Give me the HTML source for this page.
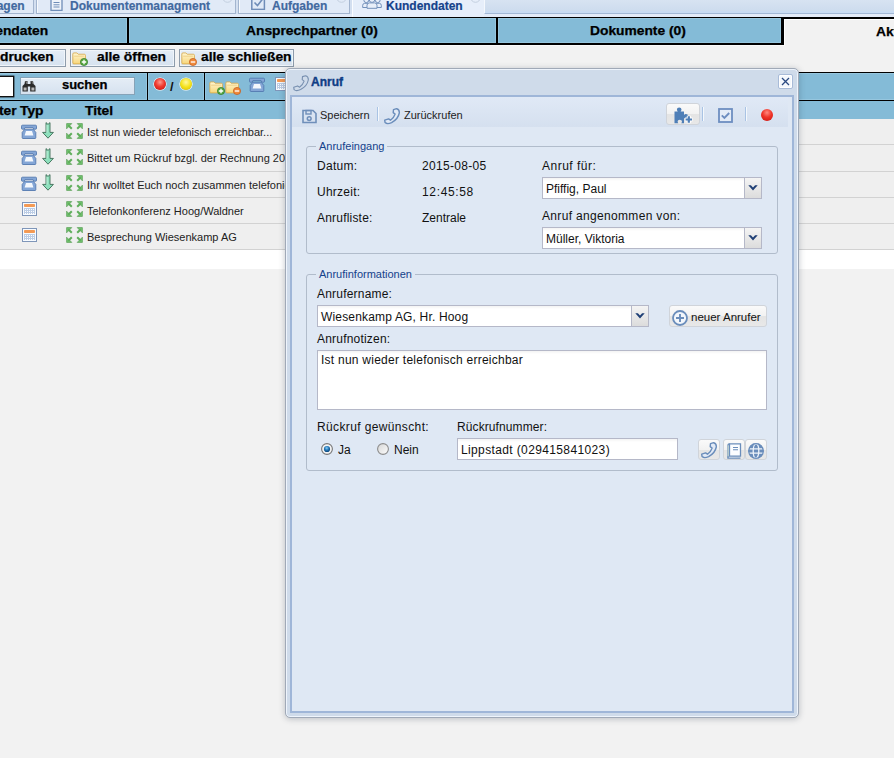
<!DOCTYPE html>
<html><head><meta charset="utf-8">
<style>
*{box-sizing:border-box;margin:0;padding:0}
html,body{width:894px;height:758px;overflow:hidden;background:#f2f2f2;font-family:"Liberation Sans",sans-serif;position:relative}
.a{position:absolute}
.t{position:absolute;white-space:pre;line-height:1}
/* tab strip */
#strip{left:0;top:0;width:894px;height:17px;background:#dfe8f4}
.tab{position:absolute;top:-4px;height:18px;background:#e1eaf7;border:1px solid #a3b5cf;border-top:none;box-shadow:inset 1px 0 0 #f6f9fd}
.tabt{position:absolute;top:1px;font-weight:bold;font-size:12px;color:#4169a0;white-space:pre;line-height:11px;-webkit-text-stroke:0.2px #4169a0}
/* header bar */
.hb{position:absolute;background:#84bbd7;border:1px solid #96c6de}
.bt{font-weight:bold;font-size:12px;color:#000;white-space:pre;position:absolute;line-height:1;transform:scaleX(1.15);transform-origin:0 0;-webkit-text-stroke:0.25px #000}
.btn{position:absolute;top:49px;height:18px;border:1px solid #8e9cab;background:linear-gradient(#e5edf6,#d6e2ef);box-shadow:inset 0 0 0 1px #f0f5fa}
.row{position:absolute;left:0;width:894px;height:26px;background:#efefef;border-bottom:1px solid #d2d2d2}
.rt{position:absolute;left:87px;font-size:11px;color:#222;white-space:pre;line-height:1;top:8px}
/* dialog */
#dlg{left:285px;top:68px;width:514px;height:650px;background:#cfdbea;border:1px solid #a0a9b7;border-radius:5px;box-shadow:0 1px 6px rgba(40,50,70,.28), inset 0 0 0 1px #eef4fc}
#body{left:290px;top:95px;width:504px;height:618px;background:#dfe8f4;border:2px solid #9fb6d8}
.lbl{position:absolute;font-size:12px;color:#111;white-space:pre;line-height:1}
.fs{position:absolute;border:1px solid #b1bccb;border-radius:3px}
.lg{position:absolute;font-size:11px;color:#15428b;background:#dfe8f4;padding:0 3px;white-space:pre;line-height:1}
.inp{position:absolute;background:#fff;border:1px solid #b5b8c8;background:linear-gradient(#f3f3f3 0,#fff 3px,#fff)}
.trig{position:absolute;top:-1px;right:-1px;width:18px;bottom:-1px;border:1px solid #b5b8c8;background:linear-gradient(#f4f4f4,#dcdcdc)}
.ibtn{position:absolute;border:1px solid #d0d4da;border-radius:3px;background:linear-gradient(#fafafa 0,#f2f2f2 50%,#e4e4e4 51%,#e8e8e8)}
</style></head><body>

<!-- ===== tab strip ===== -->
<div class="a" style="left:0;top:0;width:894px;height:17px;background:#e3ebf8"></div>
<div class="a" style="left:484px;top:-2px;width:420px;height:16px;background:linear-gradient(#d9e4f2 0,#cddcee 13px,#c9dcf3 13px);border-bottom:1px solid #a3b9d6;border-left:1px solid #f4f8fd"></div>
<div class="tab" style="left:-20px;width:54px"></div>
<div class="tabt" style="left:-28px">Anfragen</div>
<div class="tab" style="left:36px;width:200px"></div>
<div class="tabt" style="left:70px">Dokumentenmanagment</div>
<div class="tab" style="left:238px;width:112px"></div>
<div class="tabt" style="left:272px">Aufgaben</div>
<div class="a" style="left:350px;top:0;width:2px;height:14px;background:#d3dff0"></div>
<div class="a" style="left:34px;top:0;width:2px;height:14px;background:#d3dff0"></div>
<div class="a" style="left:236px;top:0;width:2px;height:14px;background:#d3dff0"></div>
<div class="a" style="left:352px;top:-2px;width:132px;height:19px;background:#e6eefa;border-left:1px solid #fafcff"></div>
<div class="tabt" style="left:386px;color:#15428b;-webkit-text-stroke:0.2px #15428b">Kundendaten</div>
<!-- ===== header bar ===== -->
<div class="a" style="left:0;top:17px;width:784px;height:28px;background:#000"></div>
<div class="hb" style="left:-2px;top:18px;width:129px;height:25px"></div>
<div class="hb" style="left:129px;top:18px;width:367px;height:25px"></div>
<div class="hb" style="left:498px;top:18px;width:283px;height:25px"></div>
<div class="a" style="left:784px;top:17px;width:110px;height:2px;background:#000"></div><div class="a" style="left:784px;top:19px;width:110px;height:1px;background:#fff"></div><div class="a" style="left:784px;top:19px;width:1px;height:27px;background:#fff"></div><div class="a" style="left:0;top:45px;width:785px;height:1px;background:#fafafa"></div>
<div class="bt" style="left:-40px;top:25px">Kundendaten</div>
<div class="bt" style="left:246px;top:25px">Ansprechpartner (0)</div>
<div class="bt" style="left:590px;top:25px">Dokumente (0)</div>
<div class="bt" style="left:876px;top:26px">Aktivitäten</div>

<!-- ===== button row ===== -->
<div class="btn" style="left:-20px;width:86px"></div>
<div class="bt" style="left:0;top:51px">drucken</div>
<div class="btn" style="left:70px;width:105px"></div>
<div class="bt" style="left:97px;top:51px">alle öffnen</div>
<div class="btn" style="left:179px;width:115px"></div>
<div class="bt" style="left:201px;top:51px">alle schließen</div>

<!-- ===== search bar ===== -->
<div class="a" style="left:0;top:72px;width:894px;height:29px;background:#000"></div>
<div class="hb" style="left:-2px;top:73px;width:149px;height:27px"></div>
<div class="hb" style="left:148px;top:73px;width:56px;height:27px"></div>
<div class="hb" style="left:205px;top:73px;width:700px;height:27px"></div>
<div class="a" style="left:-2px;top:76px;width:16px;height:21px;background:#fff;border:1px solid #111;box-shadow:0 0 0 .4px #111"></div>
<div class="btn" style="left:20px;top:77px;width:115px;height:18px;border-color:#86a3b8;box-shadow:inset 0 1px 0 #f4f8fc"></div>
<div class="bt" style="left:62px;top:79px;transform:scaleX(1.08)">suchen</div>

<!-- ===== grid header ===== -->
<div class="a" style="left:0;top:101px;width:894px;height:18px;background:#84bbd7"></div>
<div class="bt" style="left:-1px;top:105px">ter</div>
<div class="bt" style="left:20px;top:105px">Typ</div>
<div class="bt" style="left:85px;top:105px">Titel</div>

<!-- ===== rows ===== -->
<div class="row" style="top:119px;height:26px"><div class="rt">Ist nun wieder telefonisch erreichbar...</div></div>
<div class="row" style="top:145px;height:27px"><div class="rt">Bittet um Rückruf bzgl. der Rechnung 2015</div></div>
<div class="row" style="top:172px"><div class="rt">Ihr wolltet Euch noch zusammen telefonieren</div></div>
<div class="row" style="top:198px"><div class="rt">Telefonkonferenz Hoog/Waldner</div></div>
<div class="row" style="top:224px"><div class="rt">Besprechung Wiesenkamp AG</div></div>
<div class="a" style="left:0;top:250px;width:894px;height:19px;background:#fff"></div>


<!-- ===== icons top ===== -->
<svg class="a" style="left:50px;top:-3px" width="13" height="14" viewBox="0 0 13 14"><path d="M1 .5h8.5l2.5 2.5v10.3h-11z" fill="#eef3fa" stroke="#6f8db8" stroke-width="1.3"/><path d="M3.5 5.5h6M3.5 7.8h6M3.5 10h6" stroke="#6f8db8" stroke-width="1"/></svg>
<svg class="a" style="left:251px;top:-4px" width="15" height="14" viewBox="0 0 15 14"><rect x=".8" y=".8" width="12.6" height="12.6" fill="none" stroke="#6f8db8" stroke-width="1.5"/><path d="M3.5 6.5l3 3 5.5-7" fill="none" stroke="#6f8db8" stroke-width="1.6"/></svg>
<svg class="a" style="left:362px;top:-3px" width="20" height="12" viewBox="0 0 20 12"><g fill="#e8eff9" stroke="#7391bb" stroke-width="1"><path d="M.7 10.5v-2.2q0-1.8 2-2h3.5v4.2zM19.3 10.5v-2.2q0-1.8-2-2h-3.5v4.2z"/><circle cx="4.3" cy="3.2" r="2.4"/><circle cx="15.7" cy="3.2" r="2.4"/><path d="M5 11.3v-3q0-2.4 2.4-2.4h5.2q2.4 0 2.4 2.4v3z"/><circle cx="10" cy="2.6" r="2.8"/></g></svg>
<svg class="a" style="left:222px;top:-8px" width="11" height="11" viewBox="0 0 11 11"><circle cx="5.5" cy="5.5" r="4.8" fill="none" stroke="#c3cfdf" stroke-width="1"/></svg>
<svg class="a" style="left:336px;top:-8px" width="11" height="11" viewBox="0 0 11 11"><circle cx="5.5" cy="5.5" r="4.8" fill="none" stroke="#c3cfdf" stroke-width="1"/></svg>
<svg class="a" style="left:470px;top:-8px" width="11" height="11" viewBox="0 0 11 11"><circle cx="5.5" cy="5.5" r="4.8" fill="none" stroke="#c3cfdf" stroke-width="1"/></svg>

<svg width="0" height="0" style="position:absolute"><defs>
<symbol id="fold" viewBox="0 0 16 14"><path d="M.8 2.2q0-1.2 1.2-1.2h3.2l1.4 1.4h6.6q1.2 0 1.2 1.2v8.2q0 1-1 1H1.8q-1 0-1-1z" fill="url(#fg)" stroke="#d9a94a" stroke-width=".9"/><path d="M2.2 4.5h10.5" stroke="#e9c77a" stroke-width=".8"/></symbol>
<linearGradient id="fg" x1="0" y1="0" x2="0" y2="1"><stop offset="0" stop-color="#fff6d2"/><stop offset="1" stop-color="#f7d67a"/></linearGradient>
<symbol id="plus" viewBox="0 0 8 8"><circle cx="4" cy="4" r="3.6" fill="#58a843" stroke="#2f7d2a" stroke-width=".7"/><path d="M4 1.8v4.4M1.8 4h4.4" stroke="#fff" stroke-width="1.3"/></symbol>
<symbol id="minus" viewBox="0 0 8 8"><circle cx="4" cy="4" r="3.6" fill="#f08a3c" stroke="#c25a1c" stroke-width=".7"/><path d="M1.8 4h4.4" stroke="#fff" stroke-width="1.3"/></symbol>
<symbol id="dphone" viewBox="0 0 16 15"><path d="M1.5 1.2h13q1 0 1 1v2.2q0 .8-.8.8h-2l-.6-1.6h-8.2l-.6 1.6h-2q-.8 0-.8-.8v-2.2q0-1 1-1z" fill="#84a6d6" stroke="#5479b0" stroke-width=".9"/><path d="M3.8 5.2h8.4l2.6 3.2v5.3q0 .8-.8.8h-12q-.8 0-.8-.8v-5.3z" fill="#84a6d6" stroke="#5479b0" stroke-width=".9"/><path d="M5 7h6l1.4 4.5h-8.8z" fill="#f4f8fd"/></symbol>
<symbol id="arrow" viewBox="0 0 12 17"><path d="M4 .6l2 1.8 2-1.8v9.8h3.4L6 16.2.6 10.4H4z" fill="#8ee0bd" stroke="#3c6b55" stroke-width=".9" stroke-linejoin="round"/><path d="M5 3v7.5" stroke="#c8f3df" stroke-width=".9"/></symbol>
<symbol id="expand" viewBox="0 0 17 16"><g fill="#74c470" stroke="#4a9447" stroke-width=".6" stroke-linejoin="round"><path d="M.6.6h5.2L.6 5.8z"/><path d="M16.4.6h-5.2l5.2 5.2z"/><path d="M.6 15.4h5.2L.6 10.2z"/><path d="M16.4 15.4h-5.2l5.2-5.2z"/></g><g stroke="#5fae5b" stroke-width="2"><path d="M2.2 2.2l3.6 3.6M14.8 2.2l-3.6 3.6M2.2 13.8l3.6-3.6M14.8 13.8l-3.6-3.6"/></g></symbol>
<symbol id="cal" viewBox="0 0 15 14"><rect x=".5" y=".5" width="14" height="13" fill="#f7fbff" stroke="#7f96b9"/><rect x="2" y="2" width="11" height="3" rx=".8" fill="#f39a55"/><rect x="2" y="6" width="11" height="6" fill="#bccde5"/><g fill="#fbfdff"><rect x="3" y="7" width="1" height="1"/><rect x="5" y="7" width="1" height="1"/><rect x="7" y="7" width="1" height="1"/><rect x="9" y="7" width="1" height="1"/><rect x="11" y="7" width="1" height="1"/><rect x="3" y="9" width="1" height="1"/><rect x="5" y="9" width="1" height="1"/><rect x="7" y="9" width="1" height="1"/><rect x="9" y="9" width="1" height="1"/><rect x="11" y="9" width="1" height="1"/><rect x="3" y="11" width="1" height="1"/><rect x="5" y="11" width="1" height="1"/><rect x="7" y="11" width="1" height="1"/><rect x="9" y="11" width="1" height="1"/><rect x="11" y="11" width="1" height="1"/></g></symbol>
<symbol id="hset" viewBox="0 0 17 17"><path d="M9.5 1.6L12.6 .7Q15.6 1.4 15.3 5Q14.2 11 7.6 14.6Q3.2 16.6 1.1 14.6L.7 12.2L4.6 10.9L6.5 12.2Q10 9.6 11.1 6.1L9.2 4.6Z" fill="#e2eaf6" stroke="#6a8dbb" stroke-width="1.4" stroke-linejoin="round"/></symbol>
<symbol id="chev" viewBox="0 0 10 6"><path d="M.3.3h2.6L5 2.6 7.1.3h2.6L5 5.6z" fill="#1f3f75"/></symbol>
</defs></svg>

<!-- button icons -->
<svg class="a" style="left:72px;top:52px" width="15" height="13"><use href="#fold"/></svg>
<svg class="a" style="left:80px;top:58px" width="8" height="8"><use href="#plus"/></svg>
<svg class="a" style="left:181px;top:52px" width="15" height="13"><use href="#fold"/></svg>
<svg class="a" style="left:189px;top:58px" width="8" height="8"><use href="#minus"/></svg>

<!-- search bar icons -->
<svg class="a" style="left:22px;top:80px" width="14" height="12" viewBox="0 0 14 12"><path d="M3 1h2.5v3h3V1H11l.5 3 2 2v5.5H8.2V6.5H5.8v5H.5V6l2-2z" fill="#2a2a2a"/><path d="M1.6 7.5h3v3h-3zM9.4 7.5h3v3h-3z" fill="#b8b8b8"/><path d="M3.2 1.8h1.4v2M9.4 1.8h1.4v2" stroke="#9a9a9a" stroke-width=".8"/></svg>
<div class="a" style="left:154px;top:78px;width:12px;height:12px;border-radius:50%;background:radial-gradient(circle at 50% 35%,#ff9a90 0,#f03a30 45%,#c4100c 100%);box-shadow:0 0 0 .6px #fff"></div>
<div class="t" style="left:170px;top:80px;font-weight:bold;font-size:13px;color:#111">/</div>
<div class="a" style="left:180px;top:78px;width:12px;height:12px;border-radius:50%;background:radial-gradient(circle at 50% 35%,#fff8a0 0,#f5e21c 50%,#d6b800 100%);box-shadow:0 0 0 .6px #fff"></div>
<svg class="a" style="left:209px;top:81px" width="15" height="13"><use href="#fold"/></svg>
<svg class="a" style="left:217px;top:87px" width="8" height="8"><use href="#plus"/></svg>
<svg class="a" style="left:225px;top:81px" width="15" height="13"><use href="#fold"/></svg>
<svg class="a" style="left:233px;top:87px" width="8" height="8"><use href="#minus"/></svg>
<svg class="a" style="left:249px;top:77px" width="16" height="15"><use href="#dphone"/></svg>
<svg class="a" style="left:275px;top:77px" width="15" height="14"><use href="#cal"/></svg>

<!-- row icons -->
<svg class="a" style="left:21px;top:124px" width="16" height="15"><use href="#dphone"/></svg>
<svg class="a" style="left:42px;top:122px" width="12" height="17"><use href="#arrow"/></svg>
<svg class="a" style="left:66px;top:123px" width="17" height="16"><use href="#expand"/></svg>
<svg class="a" style="left:21px;top:150px" width="16" height="15"><use href="#dphone"/></svg>
<svg class="a" style="left:42px;top:148px" width="12" height="17"><use href="#arrow"/></svg>
<svg class="a" style="left:66px;top:149px" width="17" height="16"><use href="#expand"/></svg>
<svg class="a" style="left:21px;top:176px" width="16" height="15"><use href="#dphone"/></svg>
<svg class="a" style="left:42px;top:174px" width="12" height="17"><use href="#arrow"/></svg>
<svg class="a" style="left:66px;top:175px" width="17" height="16"><use href="#expand"/></svg>
<svg class="a" style="left:22px;top:202px" width="15" height="14"><use href="#cal"/></svg>
<svg class="a" style="left:66px;top:201px" width="17" height="16"><use href="#expand"/></svg>
<svg class="a" style="left:22px;top:228px" width="15" height="14"><use href="#cal"/></svg>
<svg class="a" style="left:66px;top:227px" width="17" height="16"><use href="#expand"/></svg>

<!-- ===== dialog ===== -->
<div class="a" id="dlg"></div>
<div class="t" style="left:311px;top:76px;font-weight:bold;font-size:12px;color:#0f3d85;-webkit-text-stroke:.35px #0f3d85">Anruf</div>
<div class="a" id="body"></div>

<svg class="a" style="left:293px;top:75px" width="17" height="17" viewBox="0 0 17 17"><path d="M9.5 1.6L12.6 .7Q15.6 1.4 15.3 5Q14.2 11 7.6 14.6Q3.2 16.6 1.1 14.6L.7 12.2L4.6 10.9L6.5 12.2Q10 9.6 11.1 6.1L9.2 4.6Z" fill="none" stroke="#7890b0" stroke-width="1.1" stroke-linejoin="round"/></svg>
<div class="a" style="left:778px;top:74px;width:15px;height:15px;border:1px solid #a8bbd8;border-radius:2px;background:#f4f8fd;box-shadow:inset 0 0 0 1px #fff"></div>
<svg class="a" style="left:781px;top:77px" width="9" height="9" viewBox="0 0 9 9"><path d="M1 1l7 7M8 1L1 8" stroke="#2b4a82" stroke-width="1.3"/></svg>

<!-- toolbar -->
<div class="a" style="left:292px;top:97px;width:496px;height:30px;background:linear-gradient(#e0e9f6,#d5e0ef)"></div>
<svg class="a" style="left:302px;top:109px" width="15" height="15" viewBox="0 0 15 15"><path d="M1 1.5h10l3 3v9h-13z" fill="none" stroke="#6f8fba" stroke-width="1.6"/><rect x="4" y="1.5" width="5" height="3.5" fill="none" stroke="#6f8fba" stroke-width="1.4"/><circle cx="7.2" cy="9.6" r="1.9" fill="none" stroke="#6f8fba" stroke-width="1.5"/></svg>
<div class="t" style="left:320px;top:110px;font-size:11px;color:#222">Speichern</div>
<div class="a" style="left:377px;top:107px;width:2px;height:14px;background:linear-gradient(90deg,#a9c3e4 50%,#f4f8fc 50%)"></div>
<svg class="a" style="left:384px;top:108px" width="17" height="17" viewBox="0 0 17 17"><path d="M9.5 1.6L12.6 .7Q15.6 1.4 15.3 5Q14.2 11 7.6 14.6Q3.2 16.6 1.1 14.6L.7 12.2L4.6 10.9L6.5 12.2Q10 9.6 11.1 6.1L9.2 4.6Z" fill="#e2eaf6" stroke="#6a8dbb" stroke-width="1.4" stroke-linejoin="round"/></svg>
<div class="t" style="left:404px;top:110px;font-size:11px;color:#222">Zurückrufen</div>
<div class="ibtn" style="left:666px;top:103px;width:34px;height:22px"></div>
<svg class="a" style="left:674px;top:107px" width="20" height="17" viewBox="0 0 20 17"><path d="M.5 4.5h3.3q-.9-1-.9-1.9q0-2.2 2.3-2.2t2.3 2.2q0 .9-.9 1.9h3.4v3.4q1-.9 1.9-.9q2.2 0 2.2 2.3t-2.2 2.3q-.9 0-1.9-.9v5.5H7.3q.7-.8.7-1.6q0-1.8-2.2-1.8t-2.2 1.8q0 .8.7 1.6H.5z" fill="#4f7fb7"/><path d="M14.8 8.8v7.4M11.1 12.5h7.4" stroke="#fff" stroke-width="4"/><path d="M14.8 9.3v6.4M11.6 12.5h6.4" stroke="#4f7fb7" stroke-width="2.2"/></svg>
<div class="a" style="left:702px;top:107px;width:2px;height:14px;background:linear-gradient(90deg,#a9c3e4 50%,#f4f8fc 50%)"></div>
<svg class="a" style="left:718px;top:108px" width="15" height="15" viewBox="0 0 15 15"><rect x="1" y="1" width="13" height="13" fill="#e4ecf7" stroke="#6d8ec0" stroke-width="1.8"/><path d="M3.8 7.4l2.6 2.6 4.8-5" fill="none" stroke="#6d8ec0" stroke-width="1.9"/></svg>
<div class="a" style="left:745px;top:107px;width:2px;height:14px;background:linear-gradient(90deg,#a9c3e4 50%,#f4f8fc 50%)"></div>
<div class="a" style="left:761px;top:109px;width:12px;height:12px;border-radius:50%;background:radial-gradient(circle at 50% 30%,#ff8a80 0,#f0352a 45%,#c8120d 100%)"></div>

<!-- fieldset 1 -->
<div class="fs" style="left:306px;top:146px;width:472px;height:108px"></div>
<div class="lg" style="left:316px;top:141px">Anrufeingang</div>
<div class="lbl" style="left:317px;top:160px;letter-spacing:.3px">Datum:</div>
<div class="lbl" style="left:317px;top:186px;letter-spacing:.25px">Uhrzeit:</div>
<div class="lbl" style="left:317px;top:212px;letter-spacing:.2px">Anrufliste:</div>
<div class="lbl" style="left:422px;top:160px;letter-spacing:.3px">2015-08-05</div>
<div class="lbl" style="left:422px;top:186px;letter-spacing:.65px">12:45:58</div>
<div class="lbl" style="left:422px;top:212px">Zentrale</div>
<div class="lbl" style="left:542px;top:160px;letter-spacing:.5px">Anruf für:</div>
<div class="inp" style="left:542px;top:177px;width:220px;height:22px"><div class="trig"><svg style="position:absolute;left:3px;top:7px" width="10" height="6"><use href="#chev"/></svg></div></div>
<div class="lbl" style="left:546px;top:183px">Pfiffig, Paul</div>
<div class="lbl" style="left:542px;top:210px;letter-spacing:.33px">Anruf angenommen von:</div>
<div class="inp" style="left:542px;top:227px;width:220px;height:22px"><div class="trig"><svg style="position:absolute;left:3px;top:7px" width="10" height="6"><use href="#chev"/></svg></div></div>
<div class="lbl" style="left:546px;top:233px">Müller, Viktoria</div>

<!-- fieldset 2 -->
<div class="fs" style="left:306px;top:274px;width:472px;height:197px"></div>
<div class="lg" style="left:316px;top:269px">Anrufinformationen</div>
<div class="lbl" style="left:317px;top:288px;letter-spacing:.2px">Anrufername:</div>
<div class="inp" style="left:317px;top:305px;width:332px;height:22px"><div class="trig"><svg style="position:absolute;left:3px;top:7px" width="10" height="6"><use href="#chev"/></svg></div></div>
<div class="lbl" style="left:321px;top:311px;letter-spacing:.17px">Wiesenkamp AG, Hr. Hoog</div>
<div class="ibtn" style="left:669px;top:305px;width:98px;height:22px"></div>
<svg class="a" style="left:672px;top:310px" width="17" height="17" viewBox="0 0 17 17"><circle cx="8" cy="8" r="7" fill="#f2f6fb" stroke="#6a8dbb" stroke-width="1.8"/><path d="M8 4v8M4 8h8" stroke="#6a8dbb" stroke-width="1.9"/></svg>
<div class="lbl" style="left:691px;top:312px;font-size:11.5px">neuer Anrufer</div>
<div class="lbl" style="left:317px;top:333px;letter-spacing:.2px">Anrufnotizen:</div>
<div class="inp" style="left:317px;top:350px;width:450px;height:60px"></div>
<div class="lbl" style="left:321px;top:354px;letter-spacing:.25px">Ist nun wieder telefonisch erreichbar</div>
<div class="lbl" style="left:317px;top:421px;letter-spacing:.37px">Rückruf gewünscht:</div>
<div class="lbl" style="left:457px;top:421px;letter-spacing:.1px">Rückrufnummer:</div>
<svg class="a" style="left:321px;top:443px" width="12" height="12" viewBox="0 0 12 12"><defs><radialGradient id="rb" cx=".45" cy=".35" r=".6"><stop offset="0" stop-color="#8fd0f5"/><stop offset=".5" stop-color="#2a7fbf"/><stop offset="1" stop-color="#0d4a80"/></radialGradient></defs><circle cx="6" cy="6" r="5.4" fill="#f4f4f4" stroke="#777" stroke-width="1.1"/><circle cx="6" cy="6" r="3.1" fill="url(#rb)"/></svg>
<div class="lbl" style="left:338px;top:444px">Ja</div>
<svg class="a" style="left:377px;top:443px" width="12" height="12" viewBox="0 0 12 12"><defs><linearGradient id="rg" x1="0" y1="0" x2="1" y2="1"><stop offset="0" stop-color="#d6d6d6"/><stop offset="1" stop-color="#fdfdfd"/></linearGradient></defs><circle cx="6" cy="6" r="5.4" fill="url(#rg)" stroke="#8c8c8c" stroke-width="1.1"/></svg>
<div class="lbl" style="left:394px;top:444px">Nein</div>
<div class="inp" style="left:457px;top:438px;width:221px;height:22px"></div>
<div class="lbl" style="left:461px;top:444px;letter-spacing:.37px">Lippstadt (029415841023)</div>
<div class="ibtn" style="left:698px;top:439px;width:22px;height:21px"></div>
<div class="ibtn" style="left:723px;top:439px;width:22px;height:21px"></div>
<div class="ibtn" style="left:745px;top:439px;width:22px;height:21px"></div>
<svg class="a" style="left:701px;top:442px" width="17" height="17"><use href="#hset"/></svg>
<svg class="a" style="left:727px;top:443px" width="15" height="16" viewBox="0 0 15 16"><path d="M2.5.8h11v12.4h-11zM2.5 13.2q-1.6 0-1.6 1v.9h12.6" fill="#fbfdff" stroke="#6a8dbb" stroke-width="1.3"/><path d="M1 14.2V2.3q0-1.5 1.5-1.5" fill="none" stroke="#6a8dbb" stroke-width="1.3"/><path d="M6 4.5h5M6 6.8h5" stroke="#6a8dbb" stroke-width="1.1"/><path d="M1.2 2.5v11" stroke="#cfe3d0" stroke-width=".8"/></svg>
<svg class="a" style="left:748px;top:443px" width="17" height="17" viewBox="0 0 17 17"><circle cx="8" cy="8" r="7.8" fill="#6a8dbb"/><g fill="none" stroke="#eef3fa" stroke-width="1.3"><path d="M0 5.8h16M0 10.2h16"/><ellipse cx="8" cy="8" rx="2.8" ry="7.2"/></g><circle cx="8" cy="8" r="7.3" fill="none" stroke="#6a8dbb" stroke-width="1.2"/></svg>

</body></html>
